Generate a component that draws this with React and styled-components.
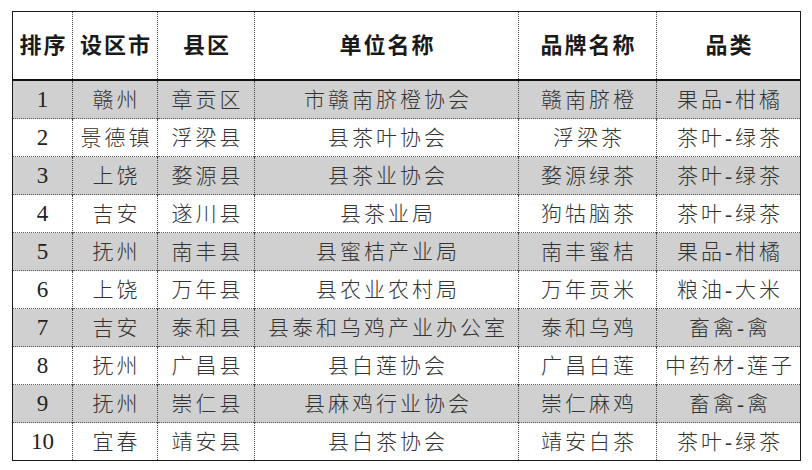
import React from 'react'
import styled, { createGlobalStyle } from 'styled-components'

const GlobalStyle = createGlobalStyle`
  html, body {
    margin: 0;
    padding: 0;
    background: #fff;
  }
  body {
    font-family: "Liberation Serif", "Noto Sans CJK SC", serif;
  }
`

const columns = [
  { title: '排序', width: 60 },
  { title: '设区市', width: 85 },
  { title: '县区', width: 97 },
  { title: '单位名称', width: 264 },
  { title: '品牌名称', width: 138 },
  { title: '品类', width: 144 },
]

const rows = [
  ['1', '赣州', '章贡区', '市赣南脐橙协会', '赣南脐橙', '果品-柑橘'],
  ['2', '景德镇', '浮梁县', '县茶叶协会', '浮梁茶', '茶叶-绿茶'],
  ['3', '上饶', '婺源县', '县茶业协会', '婺源绿茶', '茶叶-绿茶'],
  ['4', '吉安', '遂川县', '县茶业局', '狗牯脑茶', '茶叶-绿茶'],
  ['5', '抚州', '南丰县', '县蜜桔产业局', '南丰蜜桔', '果品-柑橘'],
  ['6', '上饶', '万年县', '县农业农村局', '万年贡米', '粮油-大米'],
  ['7', '吉安', '泰和县', '县泰和乌鸡产业办公室', '泰和乌鸡', '畜禽-禽'],
  ['8', '抚州', '广昌县', '县白莲协会', '广昌白莲', '中药材-莲子'],
  ['9', '抚州', '崇仁县', '县麻鸡行业协会', '崇仁麻鸡', '畜禽-禽'],
  ['10', '宜春', '靖安县', '县白茶协会', '靖安白茶', '茶叶-绿茶'],
]

const Page = styled.div`
  padding: 11px 0 0 12px;
`

const Table = styled.table`
  border-collapse: collapse;
  table-layout: fixed;
  width: 788px;
  border: 1px solid #1a1a1a;
`

const HeadCell = styled.th`
  height: 67px;
  padding: 0 0 0 2px;
  font-size: 22px;
  line-height: 26px;
  font-weight: 700;
  letter-spacing: 2px;
  color: #1a1a1a;
  text-align: center;
  vertical-align: middle;
  border-left: 1px dotted #444;
  border-bottom: 2px solid #111;
  &:first-child {
    border-left: none;
  }
`

const Row = styled.tr`
  background: ${p => (p.$shaded ? '#d0d0d0' : '#fff')};
`

const Cell = styled.td`
  height: 37px;
  padding: 0 0 0 3px;
  font-size: 21px;
  line-height: 24px;
  font-weight: 300;
  letter-spacing: 3px;
  color: #333;
  text-align: center;
  vertical-align: middle;
  white-space: nowrap;
  border-left: 1px dotted #444;
  border-top: 1px dotted #555;
`

const NumCell = styled(Cell)`
  border-left: none;
  letter-spacing: 0;
  padding: 0;
  font-size: 23px;
  line-height: 26px;
  font-weight: 400;
  color: #222;
`

export default function App() {
  return (
    <>
      <GlobalStyle />
      <Page>
        <Table>
          <colgroup>
            {columns.map(c => (
              <col key={c.title} style={{ width: c.width }} />
            ))}
          </colgroup>
          <thead>
            <tr>
              {columns.map(c => (
                <HeadCell key={c.title}>{c.title}</HeadCell>
              ))}
            </tr>
          </thead>
          <tbody>
            {rows.map((r, i) => (
              <Row key={r[0]} $shaded={i % 2 === 0}>
                <NumCell>{r[0]}</NumCell>
                {r.slice(1).map((v, j) => (
                  <Cell key={j}>{v}</Cell>
                ))}
              </Row>
            ))}
          </tbody>
        </Table>
      </Page>
    </>
  )
}
